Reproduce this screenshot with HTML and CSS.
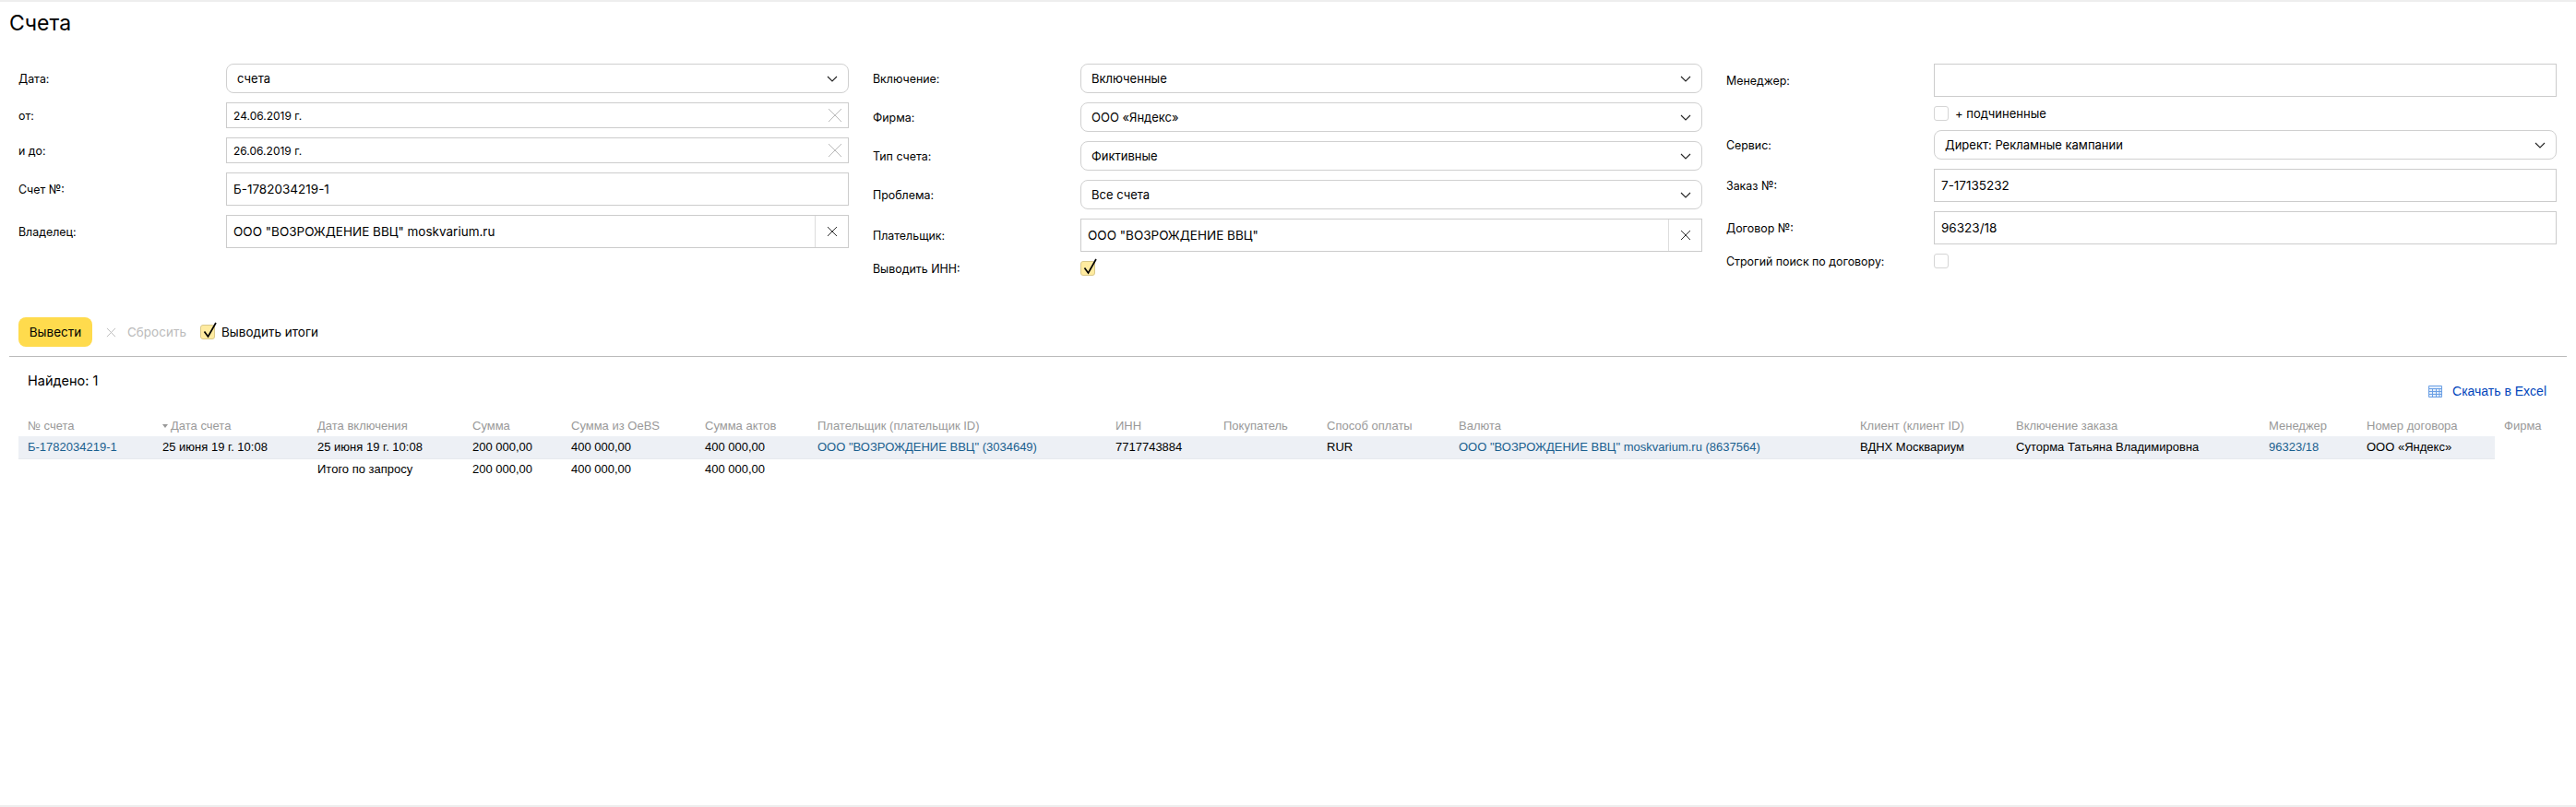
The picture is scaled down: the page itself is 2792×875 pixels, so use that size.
FILE: index.html
```html
<!DOCTYPE html>
<html lang="ru">
<head>
    <meta charset="UTF-8">
    <title>Счета</title>
    <link rel="stylesheet" href="styles.css">
</head>
<body>
    <div class="page">
        <h1 class="title">Счета</h1>

        <form class="filters">
            <div class="col col1">
                <div class="row"><label>Дата:</label>
                    <div class="select"><span>счета</span><svg class="chev" viewBox="0 0 12 7"><path d="M1 1l5 5 5-5"/></svg></div>
                </div>
                <div class="row"><label>от:</label>
                    <div class="input date"><span>24.06.2019 г.</span><svg class="cross big" viewBox="0 0 16 16"><path d="M1 1l14 14M15 1L1 15"/></svg></div>
                </div>
                <div class="row"><label>и до:</label>
                    <div class="input date"><span>26.06.2019 г.</span><svg class="cross big" viewBox="0 0 16 16"><path d="M1 1l14 14M15 1L1 15"/></svg></div>
                </div>
                <div class="row"><label>Счет №:</label>
                    <div class="input"><span>Б-1782034219-1</span></div>
                </div>
                <div class="row"><label>Владелец:</label>
                    <div class="input"><span>ООО "ВОЗРОЖДЕНИЕ ВВЦ" moskvarium.ru</span><div class="clear"><svg class="cross" viewBox="0 0 12 12"><path d="M1 1l10 10M11 1L1 11"/></svg></div></div>
                </div>
            </div>

            <div class="col col2">
                <div class="row"><label>Включение:</label>
                    <div class="select"><span>Включенные</span><svg class="chev" viewBox="0 0 12 7"><path d="M1 1l5 5 5-5"/></svg></div>
                </div>
                <div class="row"><label>Фирма:</label>
                    <div class="select"><span>ООО «Яндекс»</span><svg class="chev" viewBox="0 0 12 7"><path d="M1 1l5 5 5-5"/></svg></div>
                </div>
                <div class="row"><label>Тип счета:</label>
                    <div class="select"><span>Фиктивные</span><svg class="chev" viewBox="0 0 12 7"><path d="M1 1l5 5 5-5"/></svg></div>
                </div>
                <div class="row"><label>Проблема:</label>
                    <div class="select"><span>Все счета</span><svg class="chev" viewBox="0 0 12 7"><path d="M1 1l5 5 5-5"/></svg></div>
                </div>
                <div class="row"><label>Плательщик:</label>
                    <div class="input"><span>ООО "ВОЗРОЖДЕНИЕ ВВЦ"</span><div class="clear"><svg class="cross" viewBox="0 0 12 12"><path d="M1 1l10 10M11 1L1 11"/></svg></div></div>
                </div>
                <div class="row"><label>Выводить ИНН:</label>
                    <div class="check on"><svg viewBox="0 0 17 21"><path d="M3.5 12.5l4 5.5L16 3"/></svg></div>
                </div>
            </div>

            <div class="col col3">
                <div class="row"><label>Менеджер:</label>
                    <div class="input"></div>
                </div>
                <div class="row"><label></label>
                    <div class="check"></div><span class="check-text">+ подчиненные</span>
                </div>
                <div class="row"><label>Сервис:</label>
                    <div class="select"><span>Директ: Рекламные кампании</span><svg class="chev" viewBox="0 0 12 7"><path d="M1 1l5 5 5-5"/></svg></div>
                </div>
                <div class="row"><label>Заказ №:</label>
                    <div class="input"><span>7-17135232</span></div>
                </div>
                <div class="row"><label>Договор №:</label>
                    <div class="input"><span>96323/18</span></div>
                </div>
                <div class="row"><label>Строгий поиск по договору:</label>
                    <div class="check"></div>
                </div>
            </div>
        </form>

        <div class="actions">
            <button class="btn-submit" type="button">Вывести</button>
            <div class="reset"><svg class="cross" viewBox="0 0 12 12"><path d="M1 1l10 10M11 1L1 11"/></svg><span>Сбросить</span></div>
            <div class="check on"><svg viewBox="0 0 17 21"><path d="M3.5 12.5l4 5.5L16 3"/></svg></div>
            <span class="check-text totals">Выводить итоги</span>
        </div>

        <div class="results">
            <div class="results-top">
                <div class="found">Найдено: 1</div>
                <a class="excel" href="#">
                    <svg viewBox="0 0 15 13"><path d="M.5.5h14v12H.5zM.5 3.5h14M.5 6.5h14M.5 9.5h14M4.5 3.5v9M8.5 3.5v9M12 3.5v9"/></svg>
                    Скачать в Excel
                </a>
            </div>
            <table class="grid">
                <thead>
                    <tr>
                        <th class="c1">№ счета</th>
                        <th class="c2"><i class="sort"></i>Дата счета</th>
                        <th class="c3">Дата включения</th>
                        <th class="c4">Сумма</th>
                        <th class="c5">Сумма из OeBS</th>
                        <th class="c6">Сумма актов</th>
                        <th class="c7">Плательщик (плательщик ID)</th>
                        <th class="c8">ИНН</th>
                        <th class="c9">Покупатель</th>
                        <th class="c10">Способ оплаты</th>
                        <th class="c11">Валюта</th>
                        <th class="c12">Клиент (клиент ID)</th>
                        <th class="c13">Включение заказа</th>
                        <th class="c14">Менеджер</th>
                        <th class="c15">Номер договора</th>
                        <th class="c16">Фирма</th>
                    </tr>
                </thead>
                <tbody>
                    <tr class="hit">
                        <td><a href="#">Б-1782034219-1</a></td>
                        <td>25 июня 19 г. 10:08</td>
                        <td>25 июня 19 г. 10:08</td>
                        <td>200 000,00</td>
                        <td>400 000,00</td>
                        <td>400 000,00</td>
                        <td><a href="#">ООО "ВОЗРОЖДЕНИЕ ВВЦ" (3034649)</a></td>
                        <td>7717743884</td>
                        <td></td>
                        <td>RUR</td>
                        <td><a href="#">ООО "ВОЗРОЖДЕНИЕ ВВЦ" moskvarium.ru (8637564)</a></td>
                        <td>ВДНХ Москвариум</td>
                        <td>Суторма Татьяна Владимировна</td>
                        <td><a href="#">96323/18</a></td>
                        <td>ООО «Яндекс»</td>
                    </tr>
                    <tr class="total">
                        <td></td>
                        <td></td>
                        <td>Итого по запросу</td>
                        <td>200 000,00</td>
                        <td>400 000,00</td>
                        <td>400 000,00</td>
                    </tr>
                </tbody>
            </table>
        </div>
    </div>
</body>
</html>
```

FILE: styles.css
```css
* {
    box-sizing: border-box;
}
body {
    margin: 0;
    background: #fff;
    color: #000;
    font-family: "Inter", "Liberation Sans", sans-serif;
    font-size: 13px;
}
.page {
    height: 875px;
    border-top: 2px solid #eee;
    border-bottom: 2px solid #eee;
    overflow: hidden;
}
.title {
    margin: 0;
    padding: 8px 0 0 10px;
    height: 67px;
    font-size: 23px;
    line-height: 30px;
    font-weight: 400;
}

.filters {
    display: grid;
    grid-template-columns: 900px 899px 900px;
    column-gap: 26px;
    padding-left: 20px;
    height: 275px;
}
.col {
    display: flex;
    flex-direction: column;
    gap: 10px;
}
.row {
    display: flex;
    align-items: center;
}
.row label {
    width: 225px;
    flex-shrink: 0;
    font-size: 12.4px;
}

.select,
.input {
    flex: 1;
    display: flex;
    align-items: center;
    background: #fff;
    font-size: 13.5px;
}
.select {
    height: 32px;
    border: 1px solid #d0d0d0;
    border-radius: 8px;
    padding: 0 11px;
    justify-content: space-between;
    font-size: 13px;
}
.input {
    height: 36px;
    border: 1px solid #ccc;
    padding-left: 7px;
}
.input > span {
    flex: 1;
}
.input.date {
    height: 28px;
    font-size: 12px;
    padding-right: 6px;
}
.chev {
    width: 12px;
    height: 7px;
    fill: none;
    stroke: #222;
    stroke-width: 1.1;
}
.cross {
    width: 12px;
    height: 12px;
    fill: none;
    stroke: #333;
    stroke-width: 1;
}
.cross.big {
    width: 16px;
    height: 16px;
    stroke: #bbb;
}
.clear {
    width: 36px;
    height: 100%;
    border-left: 1px solid #ddd;
    display: flex;
    align-items: center;
    justify-content: center;
}

.check {
    position: relative;
    width: 16px;
    height: 16px;
    flex-shrink: 0;
    border: 1px solid #d5d5d5;
    border-radius: 3px;
    background: #fff;
}
.check.on {
    background: #ffeba0;
    border-color: #d9c88a;
}
/* галка вылезает за верх квадрата */
.check svg {
    position: absolute;
    left: 0;
    top: -6px;
    width: 17px;
    height: 21px;
    fill: none;
    stroke: #000;
    stroke-width: 1.7;
}
.check-text {
    margin-left: 7px;
    font-size: 13px;
}

.actions {
    display: flex;
    align-items: center;
    margin: 0 10px;
    padding: 0 10px 10px;
    border-bottom: 1px solid #bbb;
    height: 43px;
}
.btn-submit {
    width: 80px;
    height: 32px;
    border: none;
    border-radius: 8px;
    background: #ffdb4d;
    color: #000;
    font: 13.5px "Inter", "Liberation Sans", sans-serif;
    padding: 0;
}
.reset {
    display: flex;
    align-items: center;
    margin-left: 15px;
    width: 102px;
    color: #bbb;
    font-size: 13.5px;
}
.reset .cross {
    width: 11px;
    height: 11px;
    stroke: #bbb;
    margin-right: 12px;
}
.totals {
    font-size: 13.5px;
}

.results {
    padding: 0 20px;
}
.results-top {
    display: flex;
    justify-content: space-between;
    align-items: flex-start;
    height: 64px;
    padding: 16px 12px 0 10px;
}
.found {
    font-size: 14.5px;
    line-height: 20px;
}
.excel {
    display: flex;
    align-items: center;
    margin-top: 13px;
    gap: 11px;
    color: #04b;
    text-decoration: none;
    font: 14px "Liberation Sans", sans-serif;
}
.excel svg {
    width: 15px;
    height: 13px;
    fill: #e4eefb;
    stroke: #6a9fe4;
    stroke-width: 1;
}

.grid {
    border-collapse: collapse;
    table-layout: fixed;
    width: 2752px;
    font: 13px "Liberation Sans", sans-serif;
}
.grid th,
.grid td {
    padding: 0 0 0 10px;
    text-align: left;
    white-space: nowrap;
    height: 24px;
}
.grid th {
    font-weight: 400;
    color: #999;
    height: 22px;
    padding-bottom: 2px;
}
.grid a {
    color: #1a5f8f;
    text-decoration: none;
}
.hit td {
    background: #edf0f5;
    border-bottom: 1px solid #e6e9ee;
}
.grid .total td {
    height: 23px;
}
.sort {
    display: inline-block;
    width: 0;
    height: 0;
    margin-right: 3px;
    vertical-align: 2px;
    border: 3.5px solid transparent;
    border-top: 4px solid #999;
    border-bottom: 0;
}
.c1 { width: 146px; }
.c2 { width: 168px; }
.c3 { width: 168px; }
.c4 { width: 107px; }
.c5 { width: 145px; }
.c6 { width: 122px; }
.c7 { width: 323px; }
.c8 { width: 117px; }
.c9 { width: 112px; }
.c10 { width: 143px; }
.c11 { width: 435px; }
.c12 { width: 169px; }
.c13 { width: 274px; }
.c14 { width: 106px; }
.c15 { width: 149px; }
.c16 { width: 68px; }
```
